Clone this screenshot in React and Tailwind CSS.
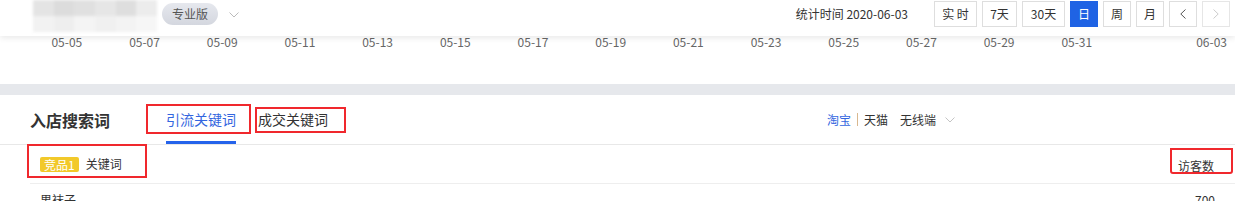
import React from 'react'

const FONT = { fontFamily: '"Noto Sans CJK SC", "Noto Sans", sans-serif' }

const dates = ['05-05', '05-07', '05-09', '05-11', '05-13', '05-15', '05-17', '05-19', '05-21', '05-23', '05-25', '05-27', '05-29', '05-31']

const periods = [
  { label: '实 时', w: 'w-[43px]' },
  { label: '7天', w: 'w-[35px]' },
  { label: '30天', w: 'w-[43px]' },
  { label: '日', w: 'w-[28px]', active: true },
  { label: '周', w: 'w-[28px]' },
  { label: '月', w: 'w-[28px]' },
]

const Chevron = ({ className }) => (
  <svg viewBox="0 0 10 6" className={className} fill="none" stroke="currentColor" strokeWidth="1">
    <polyline points="0.5,0.5 5,5 9.5,0.5" />
  </svg>
)

const BlurLogo = () => (
  <div className="grid grid-cols-6 grid-rows-2 w-[124px] h-[32px] blur-[1.5px]">
    {['#e4e4e4', '#dcdcdc', '#e0e0e0', '#e6e6e6', '#dedede', '#ececec',
      '#f2f2f2', '#eeeeee', '#f4f4f4', '#f0f0f0', '#f3f3f3', '#f6f6f6'].map((c, i) => (
      <div key={i} style={{ backgroundColor: c }} />
    ))}
  </div>
)

export default function App() {
  return (
    <div className="w-full bg-[#e6e8ec] text-[#333]" style={FONT}>
      {/* top bar */}
      <div className="relative z-10 h-[36px] bg-white shadow-[0_2px_6px_rgba(0,0,0,0.09)] flex items-start pl-[33px] pr-[5px]">
        <BlurLogo />
        <span className="ml-[5px] mt-[3px] h-[22px] px-[10px] rounded-full bg-gradient-to-b from-[#e6e8ee] to-[#d4d7df] text-[12px] leading-[22px] text-[#555]">专业版</span>
        <Chevron className="ml-[11px] mt-[12px] w-[10px] h-[6px] text-[#bbb]" />
        <span className="ml-auto mt-[6px] text-[12px] leading-[16px] text-[#333]">统计时间 2020-06-03</span>
        <div className="ml-[26px] mt-[1px] flex gap-[5px]">
          {periods.map((p) => (
            <button
              key={p.label}
              className={`${p.w} h-[26px] text-[12px] border ${p.active ? 'bg-[#1f63e4] border-[#1f63e4] text-white' : 'bg-white border-[#dedede] text-[#333]'}`}
            >
              {p.label}
            </button>
          ))}
          <button className="w-[28px] h-[26px] border border-[#dedede] bg-white flex items-center justify-center text-[#555]">
            <svg viewBox="0 0 6 10" className="w-[6px] h-[10px]" fill="none" stroke="currentColor" strokeWidth="1">
              <polyline points="5.5,0.5 0.8,5 5.5,9.5" />
            </svg>
          </button>
          <button className="w-[28px] h-[26px] border border-[#e6e6e6] bg-white flex items-center justify-center text-[#ccc]">
            <svg viewBox="0 0 6 10" className="w-[6px] h-[10px]" fill="none" stroke="currentColor" strokeWidth="1">
              <polyline points="0.5,0.5 5.2,5 0.5,9.5" />
            </svg>
          </button>
        </div>
      </div>

      {/* chart axis */}
      <div className="h-[48px] bg-white flex items-start pl-[28px] pr-[8px] text-[12px] leading-[12px] text-[#666]">
        {dates.map((d) => (
          <span key={d} className="w-[77.7px] text-center">{d}</span>
        ))}
        <span className="ml-auto">06-03</span>
      </div>

      {/* keyword card */}
      <div className="mt-[11px] bg-white">
        <div className="h-[50px] flex items-stretch border-b border-[#e8e8e8] pl-[30px]">
          <span className="self-center text-[16px] font-bold text-[#333]">入店搜索词</span>
          <div className="relative ml-[56px] flex items-center border-b-[3px] border-[#2563eb] pt-[3px]">
            <span className="text-[14px] text-[#3366e0]">引流关键词</span>
            <span className="absolute -left-[20px] -right-[15px] top-[9px] h-[30px] border-2 border-[#f0282d]" />
          </div>
          <div className="relative ml-[22px] flex items-center pb-[1px]">
            <span className="text-[14px] text-[#333]">成交关键词</span>
            <span className="absolute -left-[3px] -right-[18px] top-[12px] h-[26px] border-2 border-[#f0282d]" />
          </div>
          <div className="ml-auto mr-[280px] flex items-center text-[12px]">
            <span className="text-[#3366e0]">淘宝</span>
            <span className="mx-[6px] w-px h-[13px] bg-[#d9b88f]" />
            <span className="text-[#333]">天猫</span>
            <span className="ml-[12px] text-[#333]">无线端</span>
            <Chevron className="ml-[9px] w-[10px] h-[6px] text-[#c4c4c4]" />
          </div>
        </div>

        <div className="ml-[30px] h-[39px] flex items-center border-b border-[#eeeeee] pl-[10px] pr-[21px]">
          <div className="relative flex items-center">
            <span className="h-[15px] px-[4px] rounded-[2px] bg-[#f2c92a] text-white text-[12px] leading-[15px]">竞品1</span>
            <span className="ml-[7px] text-[12px] text-[#333]">关键词</span>
            <span className="absolute -left-[13px] -right-[25px] -top-[11px] h-[34px] border-2 border-[#f0282d]" />
          </div>
          <div className="relative ml-auto flex items-center pt-[3px]">
            <span className="text-[12px] text-[#333]">访客数</span>
            <span className="absolute -left-[8px] -right-[19px] -top-[6px] h-[26px] border-2 border-[#f0282d] rounded-b-[3px]" />
          </div>
        </div>

        <div className="h-[30px] flex items-start pl-[40px] pr-[20px] pt-[9px] text-[12px] leading-[14px] text-[#333]">
          <span>男袜子</span>
          <span className="ml-auto">700</span>
        </div>
      </div>
    </div>
  )
}
